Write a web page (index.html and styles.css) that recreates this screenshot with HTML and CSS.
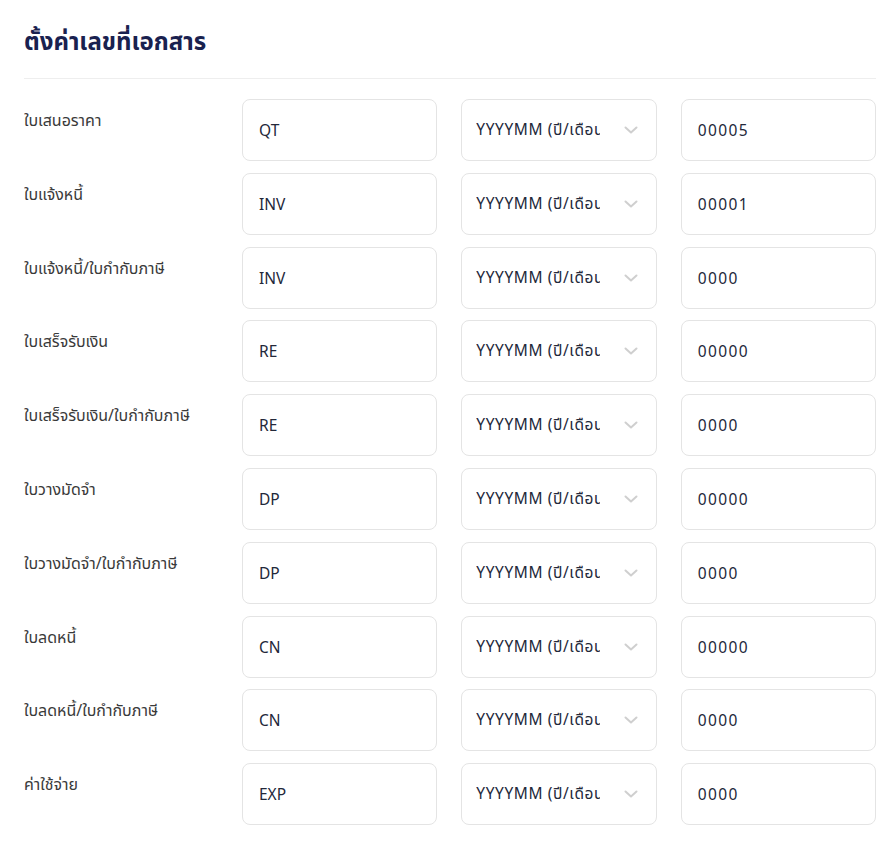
FILE: index.html
```html
<!DOCTYPE html>
<html lang="th">
<head>
    <meta charset="UTF-8">
    <meta name="viewport" content="width=device-width, initial-scale=1.0">
    <title>ตั้งค่าเลขที่เอกสาร</title>
    <link rel="stylesheet" href="styles.css">
</head>
<body>

<div class="settings">
    <h2 class="settings-title">ตั้งค่าเลขที่เอกสาร</h2>

    <div class="doc-list" id="doc-list"></div>
</div>

<script>
    // รายการเอกสาร: ชื่อ, prefix, รูปแบบเลข
    const documentos = [
        ["ใบเสนอราคา", "QT", "00005"],
        ["ใบแจ้งหนี้", "INV", "00001"],
        ["ใบแจ้งหนี้/ใบกำกับภาษี", "INV", "0000"],
        ["ใบเสร็จรับเงิน", "RE", "00000"],
        ["ใบเสร็จรับเงิน/ใบกำกับภาษี", "RE", "0000"],
        ["ใบวางมัดจำ", "DP", "00000"],
        ["ใบวางมัดจำ/ใบกำกับภาษี", "DP", "0000"],
        ["ใบลดหนี้", "CN", "00000"],
        ["ใบลดหนี้/ใบกำกับภาษี", "CN", "0000"],
        ["ค่าใช้จ่าย", "EXP", "0000"]
    ];

    const chevron = '<svg class="chevron" width="14" height="8" viewBox="0 0 14 8"><path d="M1.5 1.5 L7 6.5 L12.5 1.5" fill="none" stroke="#cfcfcf" stroke-width="2" stroke-linecap="round" stroke-linejoin="round"/></svg>';

    const lista = document.getElementById("doc-list");
    documentos.forEach(function(doc) {
        const row = document.createElement("div");
        row.className = "doc-row";
        row.innerHTML =
            '<div class="doc-label">' + doc[0] + '</div>' +
            '<div class="field">' + doc[1] + '</div>' +
            '<div class="field select"><span class="select-text">YYYYMM (ปี/เดือน)</span>' + chevron + '</div>' +
            '<div class="field number">' + doc[2] + '</div>';
        lista.appendChild(row);
    });
</script>

</body>
</html>
```

FILE: styles.css
```css
/* หน้าตั้งค่าเลขที่เอกสาร */
body {
    font-family: "Noto Sans", "Noto Sans Thai", sans-serif;
    background-color: #fff;
    color: #1f2433;
    margin: 0;
}
.settings {
    padding: 23px 17px 20px 24px;
}
.settings-title {
    margin: 0;
    font-size: 24px;
    font-weight: 700;
    color: #19214f;
    line-height: 36px;
    padding-bottom: 19px;
    border-bottom: 1px solid #eeeeee;
}
.doc-list {
    display: flex;
    flex-direction: column;
    gap: 11.8px;
    margin-top: 20px;
}
.doc-row {
    display: grid;
    grid-template-columns: 194px 1fr 1fr 1fr;
    column-gap: 24px;
}
.doc-label {
    font-size: 16px;
    color: #3a3a3a;
    padding-top: 10px;
    line-height: 22px;
}
.field {
    height: 62px;
    box-sizing: border-box;
    border: 1px solid #e4e4e4;
    border-radius: 8px;
    padding: 0 16px;
    display: flex;
    align-items: center;
    font-size: 15.5px;
    color: #23283a;
}
.number {
    letter-spacing: 1.4px;
}
.select {
    justify-content: space-between;
    padding-left: 14px;
    padding-right: 18px;
}
.select-text {
    width: 124px;
    overflow: hidden;
    white-space: nowrap;
    letter-spacing: 0.6px;
}
.chevron {
    flex-shrink: 0;
}
```
